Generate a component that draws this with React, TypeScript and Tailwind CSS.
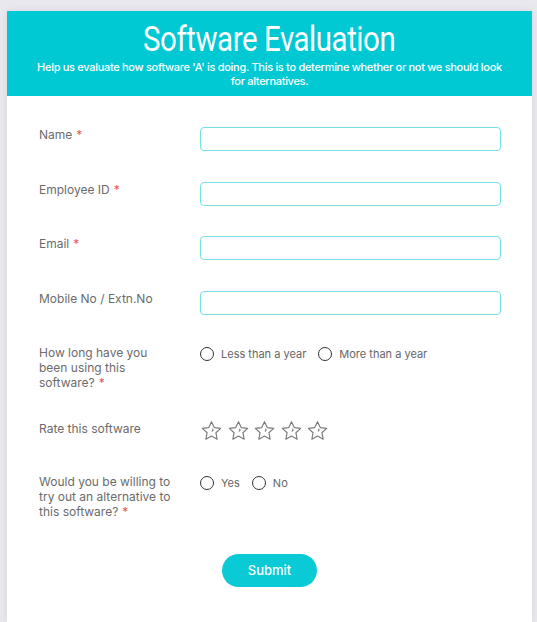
import React from "react";

function Star() {
  return (
    <svg width="23" height="22" viewBox="0 0 24 23" fill="none" stroke="#7a7a7a" strokeWidth="1.2" strokeLinejoin="round">
      <path d="M12 1.8 L14.9 7.9 L21.6 8.7 L16.6 13.3 L17.9 20 L12 16.7 L6.1 20 L7.4 13.3 L2.4 8.7 L9.1 7.9 Z" />
      <path d="M13.2 9.6 q1 1.2 -0.4 2" strokeLinecap="round" />
    </svg>
  );
}

function Radio({ label }: { label: string }) {
  return (
    <label className="flex items-center gap-[7px] mr-3">
      <span className="w-[14px] h-[14px] rounded-full border border-[#333] inline-block" />
      <span className="text-[11px] text-[#666]">{label}</span>
    </label>
  );
}

function Req() {
  return <span className="text-[#e85555] ml-1">*</span>;
}

function Row({ label, children }: { label: React.ReactNode; children: React.ReactNode }) {
  return (
    <div className="flex">
      <div className="w-[136px] mr-[25px] text-[12px] leading-[15px] text-[#6b6b6b]">{label}</div>
      <div className="flex-1">{children}</div>
    </div>
  );
}

function Field() {
  return <div className="h-[24px] w-[301px] rounded-[4px] border border-[#72e0e6] bg-white" />;
}

export default function App() {
  return (
    <div className="min-h-[622px] bg-[#e8e8ee] pt-[11px] pl-[7px] pr-[5px]" style={{ fontFamily: "Inter, 'Noto Sans', sans-serif" }}>
      <div className="bg-white shadow-[0_0_8px_rgba(0,0,0,0.08)] min-h-[611px]">
        <div className="bg-[#00c9d4] h-[85px] flex flex-col items-center pt-[10px] text-white text-center">
          <h1 className="text-[35px] leading-[38px] inline-block scale-x-[0.84] tracking-[-0.5px]" style={{ fontFamily: "Roboto, 'Noto Sans', sans-serif" }}>
            Software Evaluation
          </h1>
          <p className="text-[11px] leading-[14px] font-medium max-w-[474px] tracking-[-0.3px] mt-[1px]">
            Help us evaluate how software 'A' is doing. This is to determine whether or not we should look for alternatives.
          </p>
        </div>

        <div className="pl-[32px] pt-[31px] flex flex-col gap-[30.5px]">
          <Row label={<>Name<Req /></>}><Field /></Row>
          <Row label={<>Employee ID<Req /></>}><Field /></Row>
          <Row label={<>Email<Req /></>}><Field /></Row>
          <Row label="Mobile No / Extn.No"><Field /></Row>
          <Row label={<>How long have you been using this software?<Req /></>}>
            <div className="flex items-center pt-[1px]">
              <Radio label="Less than a year" />
              <Radio label="More than a year" />
            </div>
          </Row>
          <Row label={<>Rate this software</>}>
            <div className="flex gap-[3.5px] h-[24px] -mt-[1px]">
              <Star /><Star /><Star /><Star /><Star />
            </div>
          </Row>
          <Row label={<>Would you be willing to try out an alternative to this software?<Req /></>}>
            <div className="flex items-center pt-[1px]">
              <Radio label="Yes" />
              <Radio label="No" />
            </div>
          </Row>
        </div>

        <div className="flex justify-center pt-[35px]">
          <button className="w-[95px] h-[33px] rounded-full bg-[#0acad6] text-white text-[13px] font-medium">Submit</button>
        </div>
      </div>
    </div>
  );
}
